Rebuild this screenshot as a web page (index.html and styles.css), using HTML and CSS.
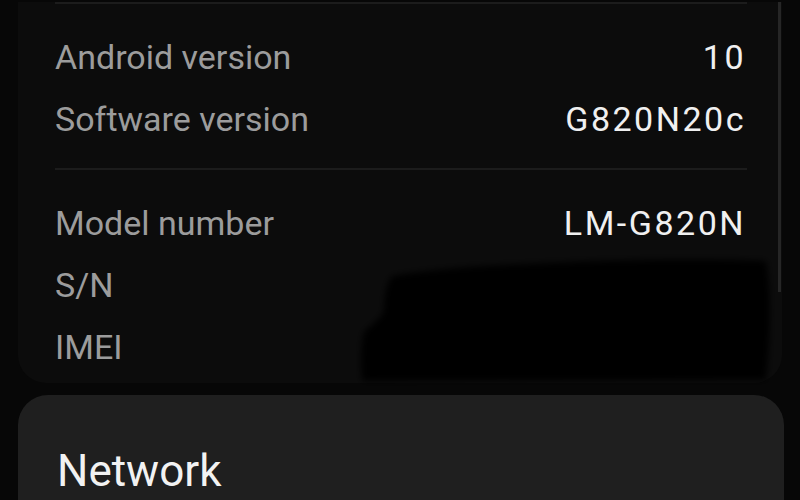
FILE: index.html
```html
<!DOCTYPE html>
<html lang="en">
<head>
    <meta charset="UTF-8">
    <meta name="viewport" content="width=device-width, initial-scale=1.0">
    <title>Software info</title>
    <link rel="stylesheet" href="styles.css">
</head>
<body>

    <div class="screen">
        <div class="info-card">
            <div class="group first">
                <div class="row">
                    <span class="label">Android version</span>
                    <span class="value">10</span>
                </div>
                <div class="row">
                    <span class="label">Software version</span>
                    <span class="value">G820N20c</span>
                </div>
            </div>

            <div class="group last">
                <div class="row">
                    <span class="label">Model number</span>
                    <span class="value">LM-G820N</span>
                </div>
                <div class="row">
                    <span class="label">S/N</span>
                    <span class="value"></span>
                </div>
                <div class="row">
                    <span class="label">IMEI</span>
                    <span class="value"></span>
                </div>
            </div>

            <div class="scrollbar"></div>
        </div>

        <div class="section-card">
            <h2>Network</h2>
        </div>

        <!-- marker scribble over the serial numbers -->
        <svg class="redact" viewBox="0 0 800 500" width="800" height="500">
            <defs>
                <filter id="soft">
                    <feGaussianBlur stdDeviation="3"/>
                </filter>
            </defs>
            <path filter="url(#soft)" fill="#020202"
                  d="M392 274 C440 266 480 264 525 262 C600 258 700 256 766 259
                     C772 290 770 340 766 378 L362 379 C360 360 361 340 364 330
                     C372 322 382 316 384 308 C384 296 386 282 392 274 Z"/>
            <path filter="url(#soft)" fill="none" stroke="#0c0c0c" stroke-width="2"
                  d="M530 323 C600 320 680 320 745 324"/>
        </svg>
    </div>

</body>
</html>
```

FILE: styles.css
```css
/* General Styles */
body {
    font-family: Roboto, 'Noto Sans', sans-serif;
    background-color: #070707;
    margin: 0;
    padding: 0;
    overflow: hidden;
}

.screen {
    position: relative;
    height: 500px;
    padding: 0 18px;
}

/* Info card */
.info-card {
    position: relative;
    background-color: #0c0c0c;
    border-radius: 0 0 28px 28px;
    padding: 0 35px 0 37px;
}

.group {
    border-top: 2px solid #1c1c1c;
    padding: 22px 0 18px;
}

.group.first {
    margin-top: 2px;
}

.group.last {
    padding-bottom: 5px;
}

.row {
    display: flex;
    justify-content: space-between;
    align-items: center;
    height: 62px;
    line-height: 62px;
}

.label {
    color: #9c9c9c;
    font-size: 34px;
}

.value {
    color: #f0f0f0;
    font-size: 34px;
    letter-spacing: 2.5px;
    margin-right: 1px;
}

.scrollbar {
    position: absolute;
    top: 0;
    right: 1px;
    width: 3px;
    height: 290px;
    background-color: #262626;
}

/* Network section */
.section-card {
    margin: 12px -2px 0 0;
    background-color: #1f1f1f;
    border-radius: 30px;
    padding: 50px 39px 40px;
}

.section-card h2 {
    margin: 0;
    color: #f2f2f2;
    font-size: 44px;
    font-weight: 400;
    line-height: 52px;
}

.redact {
    position: absolute;
    top: 0;
    left: 0;
    pointer-events: none;
}
```
